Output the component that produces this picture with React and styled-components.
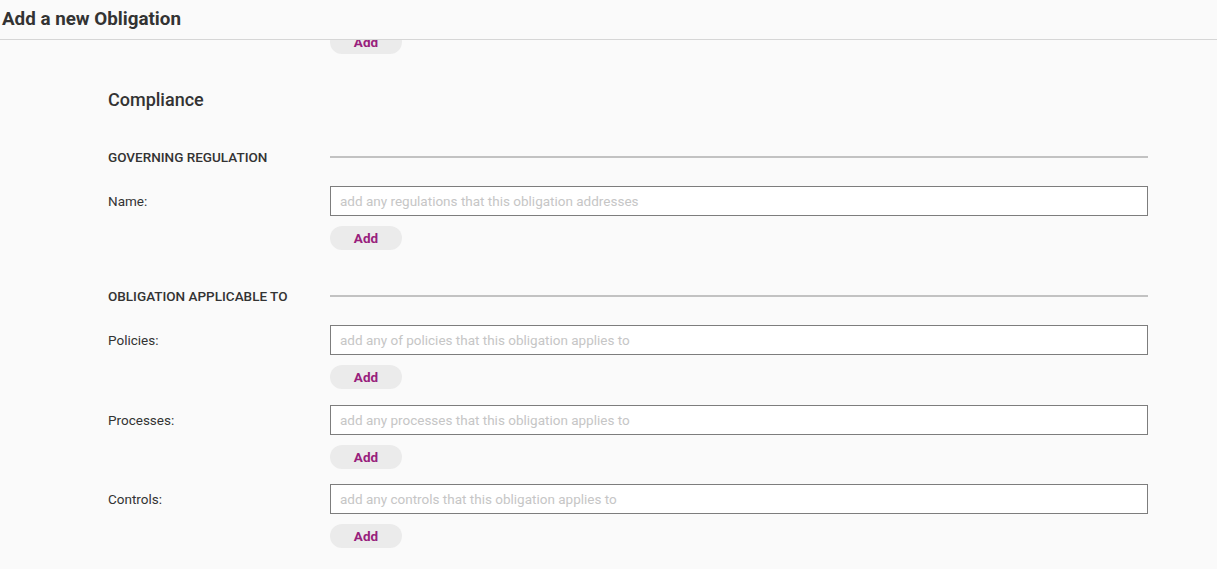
import styled, { createGlobalStyle } from "styled-components";

const GlobalStyle = createGlobalStyle`
  html, body {
    margin: 0;
    padding: 0;
    background: #fafafa;
    font-family: Roboto, "Liberation Sans", Arial, sans-serif;
    color: #333;
  }
  * { box-sizing: border-box; }
`;

const Page = styled.div`
  height: 569px;
  display: flex;
  flex-direction: column;
  overflow: hidden;
  background: #fafafa;
`;

const Header = styled.div`
  height: 40px;
  flex-shrink: 0;
  display: flex;
  align-items: center;
  padding: 0 2px 1px;
  border-bottom: 1px solid #d6d6d6;
`;

const Title = styled.h1`
  margin: 0;
  font-size: 18.8px;
  font-weight: 700;
  color: #333;
`;

const Body = styled.div`
  flex: 1;
  overflow: hidden;
`;

/* content scrolled by 10px, so the first button sits under the header */
const Scrolled = styled.div`
  margin-top: -10px;
  padding: 0 69px 0 108px;
  display: flex;
  flex-direction: column;
`;

const Heading = styled.h2`
  margin: 36px 0 0;
  font-size: 18px;
  line-height: 20px;
  font-weight: 500;
  color: #333;
`;

const Section = styled.div`
  margin-top: ${({ $top }) => $top}px;
  display: flex;
  flex-direction: column;
`;

const SectionHead = styled.div`
  display: grid;
  grid-template-columns: 222px 1fr;
  align-items: center;
  height: 20px;
  margin-bottom: 19px;
`;

const SectionTitle = styled.span`
  font-size: 13.5px;
  font-weight: 500;
  text-transform: uppercase;
  color: #333;
`;

const Rule = styled.div`
  height: 2px;
  background: #c2c2c2;
`;

const Field = styled.div`
  display: grid;
  grid-template-columns: 222px 1fr;
  grid-template-rows: ${({ $buttonOnly }) => ($buttonOnly ? "auto" : "30px auto")};
  row-gap: 10px;
  & + & {
    margin-top: 15.5px;
  }
`;

const Label = styled.label`
  align-self: center;
  font-size: 13.5px;
  color: #333;
`;

const Input = styled.input`
  height: 30px;
  width: 100%;
  border: 1px solid #7d7d7d;
  border-radius: 0;
  background: #fff;
  padding: 0 9px;
  font-family: Roboto, "Liberation Sans", Arial, sans-serif;
  font-size: 13.5px;
  color: #333;
  outline: none;
  &::placeholder {
    color: #c6c6c6;
  }
`;

const AddButton = styled.button`
  grid-column: 2;
  justify-self: start;
  width: 72px;
  height: 24px;
  border: none;
  border-radius: 12px;
  background: #ebebeb;
  color: #98207c;
  font-family: Roboto, "Liberation Sans", Arial, sans-serif;
  font-size: 13.5px;
  font-weight: 700;
  padding: 0;
  cursor: pointer;
`;

const FormField = ({ label, placeholder }) => (
  <Field>
    <Label>{label}</Label>
    <Input placeholder={placeholder} />
    <AddButton>Add</AddButton>
  </Field>
);

const App = () => (
  <Page>
    <GlobalStyle />
    <Header>
      <Title>Add a new Obligation</Title>
    </Header>
    <Body>
      <Scrolled>
        <Field $buttonOnly>
          <AddButton>Add</AddButton>
        </Field>
        <Heading>Compliance</Heading>
        <Section $top={37}>
          <SectionHead>
            <SectionTitle>Governing Regulation</SectionTitle>
            <Rule />
          </SectionHead>
          <FormField
            label="Name:"
            placeholder="add any regulations that this obligation addresses"
          />
        </Section>
        <Section $top={36}>
          <SectionHead>
            <SectionTitle>Obligation applicable to</SectionTitle>
            <Rule />
          </SectionHead>
          <FormField
            label="Policies:"
            placeholder="add any of policies that this obligation applies to"
          />
          <FormField
            label="Processes:"
            placeholder="add any processes that this obligation applies to"
          />
          <FormField
            label="Controls:"
            placeholder="add any controls that this obligation applies to"
          />
        </Section>
      </Scrolled>
    </Body>
  </Page>
);

export default App;
